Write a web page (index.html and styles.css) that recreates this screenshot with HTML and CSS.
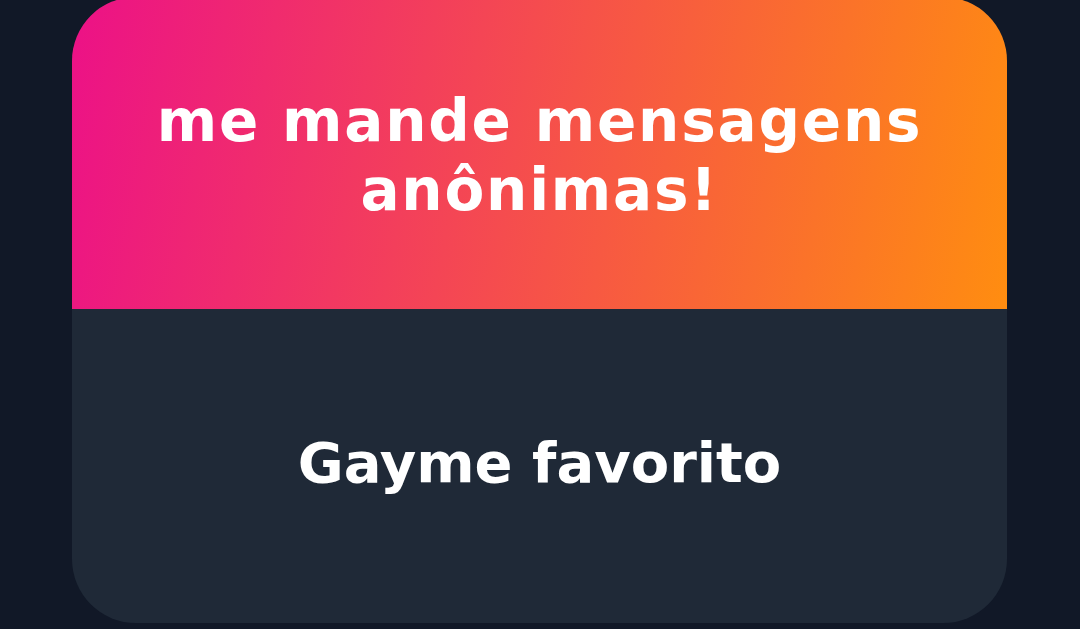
FILE: index.html
```html
<!DOCTYPE html>
<html lang="pt">
<head>
<meta charset="utf-8">
<link rel="stylesheet" href="styles.css">
</head>
<body>
  <main class="page">
    <section class="card">
      <header class="card-head">
        <h1 class="title">me mande mensagens anônimas!</h1>
      </header>
      <div class="card-body">
        <p class="question">Gayme favorito</p>
      </div>
    </section>
  </main>
</body>
</html>
```

FILE: styles.css
```css
html, body {
  margin: 0;
  padding: 0;
  background: #111827;
  height: 100%;
  overflow: hidden;
}
.page {
  display: flex;
  justify-content: center;
  padding-left: 72px;
  padding-right: 73px;
}
.card {
  flex: 1;
  margin-top: -3px;
  height: 626px;
  border-radius: 64px;
  overflow: hidden;
  display: flex;
  flex-direction: column;
  background: #1f2937;
}
.card-head {
  height: 312px;
  flex: none;
  background: linear-gradient(100deg, #ec1187 0%, #ff8d10 100%);
  display: flex;
  align-items: center;
  justify-content: center;
  padding: 6px 40px 0;
  box-sizing: border-box;
}
.title {
  margin: 0;
  color: #fff;
  font-family: "DejaVu Sans", "Liberation Sans", sans-serif;
  font-weight: 700;
  font-size: 58px;
  letter-spacing: 1.8px;
  line-height: 69px;
  text-align: center;
  max-width: 820px;
}
.card-body {
  flex: 1;
  display: flex;
  align-items: center;
  justify-content: center;
}
.question {
  margin: 0 0 8px;
  color: #fff;
  font-family: "DejaVu Sans", "Liberation Sans", sans-serif;
  font-weight: 700;
  font-size: 56px;
}
```
